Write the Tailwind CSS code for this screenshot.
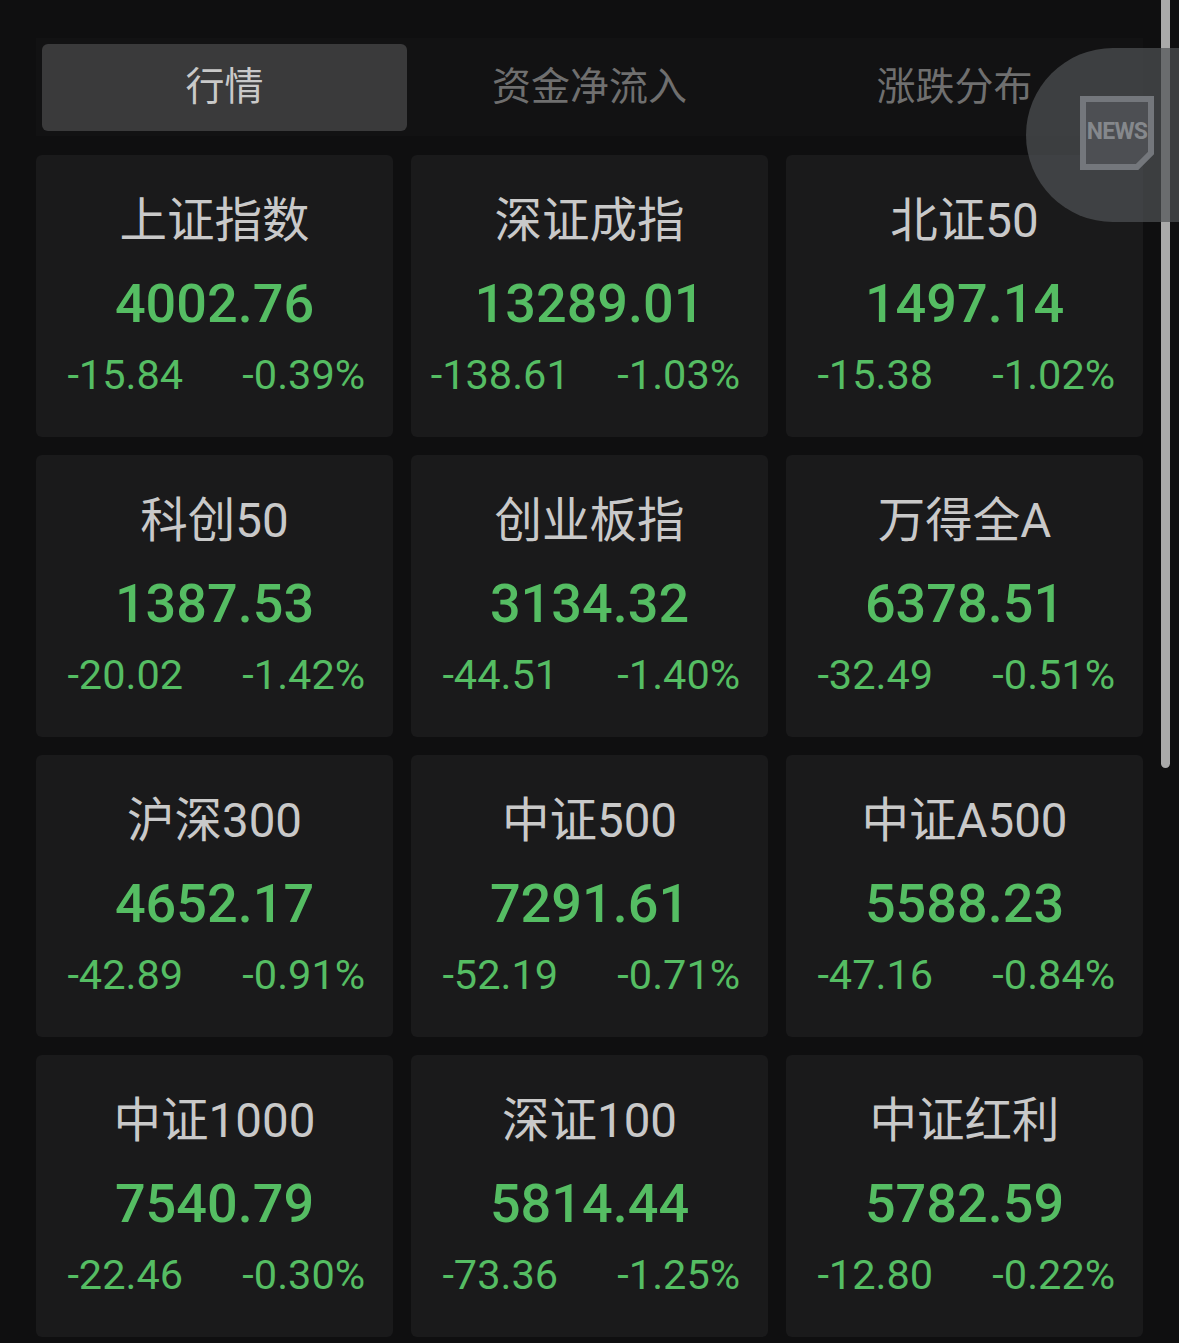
<!DOCTYPE html>
<html lang="zh-CN">
<head>
  <meta charset="UTF-8">
  <meta name="viewport" content="width=device-width, initial-scale=1.0">
  <title>行情</title>
  <script src="https://cdn.jsdelivr.net/npm/@tailwindcss/browser@4"></script>
</head>
<body class="bg-[#0f0f10] h-[1343px] overflow-hidden relative font-['Roboto','Noto_Sans_CJK_SC',sans-serif]">
  <!-- Tabs -->
  <div class="pt-[38px] pl-[36px] w-[1143px]">
    <div class="h-[98px] bg-[#121213] flex items-center pl-[6px] text-[39px]">
      <div class="w-[365px] h-[87px] rounded-[6px] bg-[#3a3a3b] text-[#c9c9c9] flex items-center justify-center">行情</div>
      <div class="w-[365px] text-center text-[#6f6f6f]">资金净流入</div>
      <div class="w-[365px] text-center text-[#6f6f6f]">涨跌分布</div>
    </div>
  </div>

  <!-- Index cards -->
  <div id="grid" class="grid grid-cols-3 gap-[18px] pl-[36px] pt-[19px] w-[1143px]"></div>

  <!-- Scrollbar -->
  <div class="absolute left-[1161px] top-0 w-[9px] h-[768px] rounded-b-full bg-[#a9a9a9]"></div>

  <!-- Floating news button -->
  <div class="absolute left-[1026px] top-[48px] w-[153px] h-[174px] rounded-l-[87px] bg-[#505356]/70 pl-[54px] pt-[48px]">
    <div class="relative w-[74px] h-[74px] flex items-center justify-center pb-[2px]">
      <svg class="absolute inset-0" width="74" height="74" viewBox="0 0 74 74" fill="none">
        <path d="M3 3H71V57L57 71H3Z" fill="#4d4f53" stroke="#74777c" stroke-width="6"/>
      </svg>
      <span class="relative text-[#85888c] text-[23px] font-bold tracking-[-0.8px] font-['Roboto',sans-serif]">NEWS</span>
    </div>
  </div>

  <script>
    const indexes = [
      ['上证指数', '4002.76', '-15.84', '-0.39%'],
      ['深证成指', '13289.01', '-138.61', '-1.03%'],
      ['北证50', '1497.14', '-15.38', '-1.02%'],
      ['科创50', '1387.53', '-20.02', '-1.42%'],
      ['创业板指', '3134.32', '-44.51', '-1.40%'],
      ['万得全A', '6378.51', '-32.49', '-0.51%'],
      ['沪深300', '4652.17', '-42.89', '-0.91%'],
      ['中证500', '7291.61', '-52.19', '-0.71%'],
      ['中证A500', '5588.23', '-47.16', '-0.84%'],
      ['中证1000', '7540.79', '-22.46', '-0.30%'],
      ['深证100', '5814.44', '-73.36', '-1.25%'],
      ['中证红利', '5782.59', '-12.80', '-0.22%']
    ];

    document.getElementById('grid').innerHTML = indexes.map(([name, price, diff, pct]) => `
      <div class="h-[282px] rounded-[6px] bg-[#1a1a1b] flex flex-col items-center pt-[37px]">
        <div class="h-[58px] leading-[58px] text-[47.5px] text-[#c9c9c9]">${name}</div>
        <div class="h-[58px] mt-[25px] leading-[58px] text-[54px] font-medium text-[#55bd63]">${price}</div>
        <div class="w-full mt-[19px] grid grid-cols-2 text-[41.5px] leading-[46px] text-center text-[#55bd63]">
          <span>${diff}</span>
          <span>${pct}</span>
        </div>
      </div>`).join('');
  </script>
</body>
</html>
